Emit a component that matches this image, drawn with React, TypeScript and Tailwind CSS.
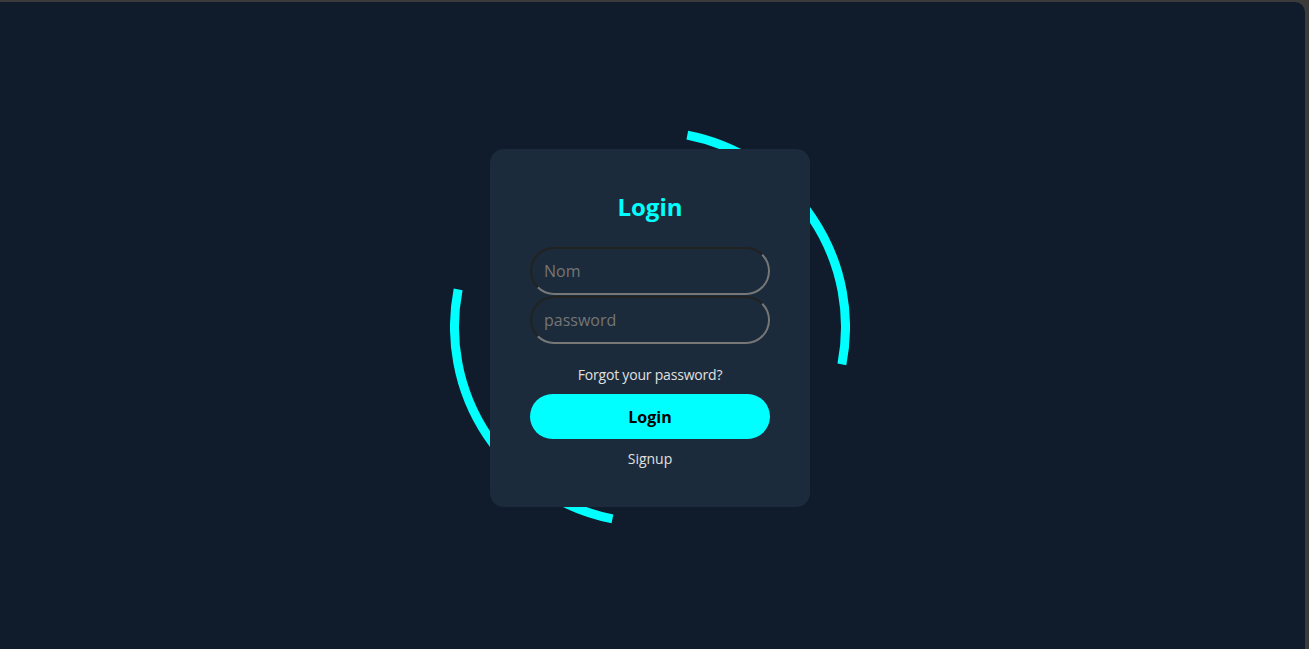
import React, { useState } from 'react';

const FONT = "font-['Open_Sans','Noto_Sans',sans-serif]";

const Ring: React.FC = () => {
  // two cyan arcs, each a quarter of the circle, opposite each other
  const r = 195.5;
  const q = (2 * Math.PI * r) / 4;
  return (
    <svg
      className="absolute left-[-40px] top-[-22px] pointer-events-none"
      width={400}
      height={400}
      viewBox="0 0 400 400"
    >
      <circle
        cx={200}
        cy={200}
        r={r}
        fill="none"
        stroke="#00ffff"
        strokeWidth={9}
        strokeDasharray={`${q} ${q}`}
        transform="rotate(-79 200 200)"
      />
    </svg>
  );
};

const App: React.FC = () => {
  const [name, setName] = useState('');
  const [password, setPassword] = useState('');

  return (
    <div className={`h-screen w-full bg-[#3b3b3b] pt-[2px] pr-[4px] ${FONT}`}>
      <div className="h-full w-full rounded-tr-[10px] bg-[#101b2b] flex items-center justify-center pr-[5px] pt-[5px]">
        <div className="relative w-[320px] h-[358px]">
          <Ring />
          <form
            onSubmit={(e) => e.preventDefault()}
            className="relative z-10 h-full w-full rounded-[14px] bg-[#1b2b3b] px-10 pt-[42px] flex flex-col items-center"
          >
            <h2 className="text-[24px] leading-[32px] font-bold text-[#00ffff]">Login</h2>

            <div className="mt-[24px] w-full flex flex-col gap-px">
              <input
                value={name}
                onChange={(e) => setName(e.target.value)}
                placeholder="Nom"
                className="h-[48px] w-full rounded-full border-2 border-t-[#222222] border-l-[#222222] border-r-[#777777] border-b-[#777777] bg-transparent px-[12px] text-[16px] text-white placeholder:text-[#757575] outline-none"
              />
              <input
                type="password"
                value={password}
                onChange={(e) => setPassword(e.target.value)}
                placeholder="password"
                className="h-[48px] w-full rounded-full border-2 border-t-[#222222] border-l-[#222222] border-r-[#777777] border-b-[#777777] bg-transparent px-[12px] text-[16px] text-white placeholder:text-[#757575] outline-none"
              />
            </div>

            <a href="#" className="mt-[21px] text-[14px] leading-[20px] tracking-[-0.2px] text-[#e0e0e0]">
              Forgot your password?
            </a>

            <button
              type="submit"
              className="mt-[9px] h-[45px] w-full rounded-full bg-[#00ffff] text-[16px] font-bold text-black"
            >
              Login
            </button>

            <a href="#" className="mt-[10px] text-[14px] leading-[20px] text-[#e0e0e0]">
              Signup
            </a>
          </form>
        </div>
      </div>
    </div>
  );
};

export default App;
